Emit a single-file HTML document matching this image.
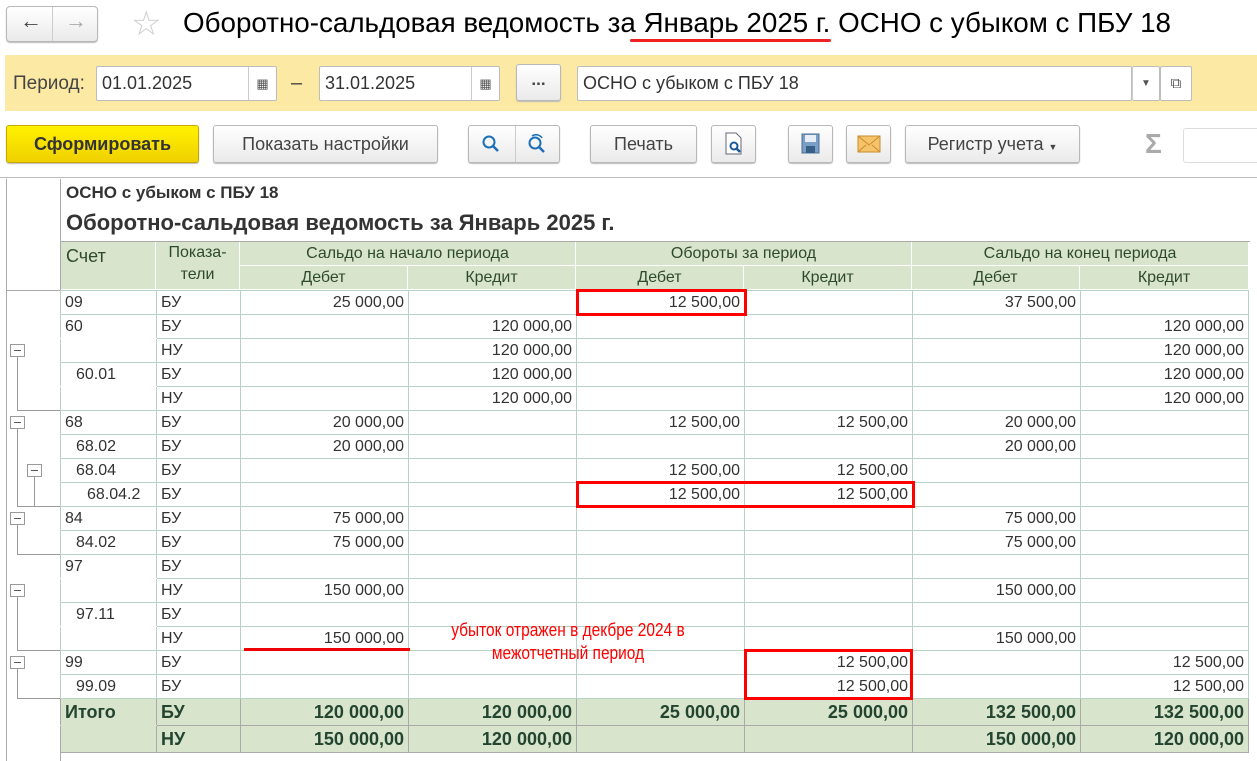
<!DOCTYPE html>
<html><head><meta charset="utf-8">
<style>
*{box-sizing:border-box;margin:0;padding:0}
body{width:1257px;height:761px;overflow:hidden;background:#fff;font-family:"Liberation Sans",Arial,sans-serif;color:#333;position:relative}
.abs{position:absolute}
.btn{position:absolute;border:1px solid #b8b8b8;border-radius:3px;background:linear-gradient(#fff,#eaeaea);box-shadow:0 1px 1px #bbb;font-size:17px;color:#444;text-align:center}
.inp{position:absolute;background:#fff;border:1px solid #bdbdbd;border-radius:2px;font-size:18px;color:#333;padding-left:5px;line-height:33px;height:35px}
table{position:absolute;left:60px;top:290px;border-collapse:collapse;table-layout:fixed;font-size:16px}
td{border:1px solid #b6d3c6;height:24px;padding:0 4px;color:#333;white-space:nowrap;overflow:hidden}
td.n{text-align:right}
tr.t td{background:#d8e4cc;border-color:#aaa;height:27px;font-weight:bold;font-size:18px;color:#234530}
.hd{position:absolute;background:#d8e4cc;color:#2e4a2e;font-size:16px;text-align:center;border-right:1px solid #fff;border-bottom:1px solid #fff}
.red{position:absolute;border:3px solid #f00}
.mb{position:absolute;width:15px;height:13px;border:1px solid #999;background:#fff;}
.mb:after{content:"";position:absolute;left:3px;right:3px;top:5px;height:1px;background:#555}
.vl{position:absolute;width:1px;background:#999}
.hl{position:absolute;height:1px;background:#999}
.cal{position:absolute;width:28px;height:33px;border-left:1px solid #ccc;font-size:13px;text-align:center;line-height:33px;color:#555}
</style></head><body>
<!-- nav -->
<div class="btn" style="left:6px;top:6px;width:92px;height:36px;border-radius:4px"></div>
<div class="abs" style="left:52px;top:7px;width:1px;height:34px;background:#ccc"></div>
<div class="abs" style="left:20px;top:8px;font-size:22px;color:#444;font-weight:bold">&#8592;</div>
<div class="abs" style="left:65px;top:8px;font-size:22px;color:#aaa;font-weight:bold">&#8594;</div>
<div class="abs" style="left:131px;top:4px;font-size:34px;color:#ccc">&#9734;</div>
<div class="abs" style="left:183px;top:7px;font-size:28px;color:#000;white-space:nowrap;transform:scaleX(0.992);transform-origin:left">Оборотно-сальдовая ведомость за Январь 2025 г. ОСНО с убыком с ПБУ 18</div>
<div class="abs" style="left:630px;top:39px;width:201px;height:3px;background:#e22;border-radius:2px"></div>
<!-- period bar -->
<div class="abs" style="left:5px;top:55px;width:1252px;height:56px;background:#fbe9a4"></div>
<div class="abs" style="left:13px;top:73px;font-size:19px;color:#444">Период:</div>
<div class="inp" style="left:96px;top:66px;width:181px">01.01.2025<div class="cal" style="left:151px;top:0">&#9638;</div></div>
<div class="abs" style="left:291px;top:72px;font-size:20px;color:#444">–</div>
<div class="inp" style="left:319px;top:66px;width:181px">31.01.2025<div class="cal" style="left:151px;top:0">&#9638;</div></div>
<div class="btn" style="left:516px;top:64px;width:45px;height:37px;line-height:30px;font-weight:bold">...</div>
<div class="inp" style="left:577px;top:66px;width:555px">ОСНО с убыком с ПБУ 18</div>
<div class="inp" style="left:1132px;top:66px;width:28px;border-left:1px solid #ccc;padding:0;font-size:10px;text-align:center;color:#555">&#9660;</div>
<div class="inp" style="left:1160px;top:66px;width:32px;padding:0;font-size:15px;text-align:center;color:#555">&#10697;</div>
<!-- toolbar -->
<div class="btn" style="left:6px;top:125px;width:193px;height:38px;line-height:36px;background:linear-gradient(#fff200,#f0d000);border-color:#c8a800;font-weight:bold;color:#333;font-size:18px">Сформировать</div>
<div class="btn" style="left:213px;top:125px;width:225px;height:38px;line-height:36px;font-size:18px">Показать настройки</div>
<div class="btn" style="left:468px;top:125px;width:92px;height:38px"></div>
<div class="abs" style="left:515px;top:126px;width:1px;height:36px;background:#ccc"></div>
<svg class="abs" style="left:480px;top:133px" width="22" height="22"><circle cx="9" cy="9" r="5.5" fill="none" stroke="#1c6fb8" stroke-width="2"/><line x1="13" y1="13" x2="18" y2="18" stroke="#1c6fb8" stroke-width="2.5"/></svg>
<svg class="abs" style="left:526px;top:133px" width="22" height="22"><circle cx="9" cy="10" r="5.5" fill="none" stroke="#1c6fb8" stroke-width="2"/><line x1="13" y1="14" x2="18" y2="19" stroke="#1c6fb8" stroke-width="2.5"/><path d="M6 3 A7 7 0 0 1 16 5" fill="none" stroke="#1c6fb8" stroke-width="1.5"/></svg>
<div class="btn" style="left:590px;top:125px;width:107px;height:38px;line-height:36px;font-size:18px">Печать</div>
<div class="btn" style="left:711px;top:125px;width:45px;height:38px"></div>
<svg class="abs" style="left:722px;top:131px" width="24" height="26"><path d="M4 2h10l5 5v16H4z" fill="#fff" stroke="#667"/><circle cx="12" cy="15" r="3.5" fill="none" stroke="#1a5a98" stroke-width="2"/><line x1="14.5" y1="17.5" x2="18" y2="21" stroke="#1a5a98" stroke-width="2.5"/></svg>
<div class="btn" style="left:788px;top:125px;width:45px;height:38px"></div>
<svg class="abs" style="left:800px;top:133px" width="22" height="22"><rect x="2" y="1" width="17" height="19" fill="#7a9fc7" stroke="#4a6f97"/><rect x="5" y="2" width="11" height="7" fill="#e8eef5"/><rect x="6" y="13" width="9" height="7" fill="#3a5f87"/></svg>
<div class="btn" style="left:846px;top:125px;width:45px;height:38px"></div>
<svg class="abs" style="left:857px;top:135px" width="24" height="18"><rect x="1" y="1" width="22" height="16" fill="#f5c36a" stroke="#c98d2c"/><path d="M1 1l11 9 11-9M1 17l8-7M23 17l-8-7" fill="none" stroke="#c98d2c"/></svg>
<div class="btn" style="left:905px;top:125px;width:175px;height:38px;line-height:36px;font-size:18px">Регистр учета <span style="font-size:9px">&#9660;</span></div>
<div class="abs" style="left:1145px;top:128px;font-size:28px;color:#aaa;font-weight:bold">&#931;</div>
<div class="abs" style="left:1183px;top:128px;width:80px;height:35px;border:1px solid #ddd;border-radius:3px"></div>
<!-- report frame -->
<div class="abs" style="left:0;top:177px;width:1257px;height:1px;background:#bbb"></div>
<div class="abs" style="left:6px;top:179px;width:1px;height:582px;background:#aaa"></div>
<div class="abs" style="left:60px;top:179px;width:1px;height:112px;background:#aaa"></div>
<div class="abs" style="left:60px;top:698px;width:1px;height:63px;background:#aaa"></div>
<div class="abs" style="left:66px;top:183px;font-size:17px;font-weight:bold;color:#333">ОСНО с убыком с ПБУ 18</div>
<div class="abs" style="left:66px;top:210px;font-size:22px;font-weight:bold;color:#333">Оборотно-сальдовая ведомость за Январь 2025 г.</div>
<div class="abs" style="left:60px;top:241px;width:1190px;height:1px;background:#aaa"></div>
<div class="abs" style="left:6px;top:290px;width:55px;height:1px;background:#aaa"></div>
<!-- header -->
<div class="hd" style="left:61px;top:242px;width:95px;height:48px;text-align:left;padding:4px 0 0 5px;font-size:18px">Счет</div>
<div class="hd" style="left:156px;top:242px;width:84px;height:48px;line-height:22px">Показа-<br>тели</div>
<div class="hd" style="left:240px;top:242px;width:336px;height:24px;line-height:24px">Сальдо на начало периода</div>
<div class="hd" style="left:576px;top:242px;width:336px;height:24px;line-height:24px">Обороты за период</div>
<div class="hd" style="left:912px;top:242px;width:337px;height:24px;line-height:24px">Сальдо на конец периода</div>
<div class="hd" style="left:240px;top:266px;width:168px;height:24px;line-height:24px">Дебет</div>
<div class="hd" style="left:408px;top:266px;width:168px;height:24px;line-height:24px">Кредит</div>
<div class="hd" style="left:576px;top:266px;width:168px;height:24px;line-height:24px">Дебет</div>
<div class="hd" style="left:744px;top:266px;width:168px;height:24px;line-height:24px">Кредит</div>
<div class="hd" style="left:912px;top:266px;width:168px;height:24px;line-height:24px">Дебет</div>
<div class="hd" style="left:1080px;top:266px;width:169px;height:24px;line-height:24px">Кредит</div>
<table>
<colgroup><col style="width:96px"><col style="width:84px"><col style="width:168px"><col style="width:168px"><col style="width:168px"><col style="width:168px"><col style="width:168px"><col style="width:168px"></colgroup>
<tr><td>09</td><td>БУ</td><td class="n">25 000,00</td><td></td><td class="n">12 500,00</td><td></td><td class="n">37 500,00</td><td></td></tr>
<tr><td style="border-bottom-color:#fff">60</td><td>БУ</td><td></td><td class="n">120 000,00</td><td></td><td></td><td></td><td class="n">120 000,00</td></tr>
<tr><td></td><td>НУ</td><td></td><td class="n">120 000,00</td><td></td><td></td><td></td><td class="n">120 000,00</td></tr>
<tr><td style="padding-left:15px;border-bottom-color:#fff">60.01</td><td>БУ</td><td></td><td class="n">120 000,00</td><td></td><td></td><td></td><td class="n">120 000,00</td></tr>
<tr><td></td><td>НУ</td><td></td><td class="n">120 000,00</td><td></td><td></td><td></td><td class="n">120 000,00</td></tr>
<tr><td>68</td><td>БУ</td><td class="n">20 000,00</td><td></td><td class="n">12 500,00</td><td class="n">12 500,00</td><td class="n">20 000,00</td><td></td></tr>
<tr><td style="padding-left:15px">68.02</td><td>БУ</td><td class="n">20 000,00</td><td></td><td></td><td></td><td class="n">20 000,00</td><td></td></tr>
<tr><td style="padding-left:15px">68.04</td><td>БУ</td><td></td><td></td><td class="n">12 500,00</td><td class="n">12 500,00</td><td></td><td></td></tr>
<tr><td style="padding-left:26px">68.04.2</td><td>БУ</td><td></td><td></td><td class="n">12 500,00</td><td class="n">12 500,00</td><td></td><td></td></tr>
<tr><td>84</td><td>БУ</td><td class="n">75 000,00</td><td></td><td></td><td></td><td class="n">75 000,00</td><td></td></tr>
<tr><td style="padding-left:15px">84.02</td><td>БУ</td><td class="n">75 000,00</td><td></td><td></td><td></td><td class="n">75 000,00</td><td></td></tr>
<tr><td style="border-bottom-color:#fff">97</td><td>БУ</td><td></td><td></td><td></td><td></td><td></td><td></td></tr>
<tr><td></td><td>НУ</td><td class="n">150 000,00</td><td></td><td></td><td></td><td class="n">150 000,00</td><td></td></tr>
<tr><td style="padding-left:15px;border-bottom-color:#fff">97.11</td><td>БУ</td><td></td><td></td><td></td><td></td><td></td><td></td></tr>
<tr><td></td><td>НУ</td><td class="n">150 000,00</td><td></td><td></td><td></td><td class="n">150 000,00</td><td></td></tr>
<tr><td>99</td><td>БУ</td><td></td><td></td><td></td><td class="n">12 500,00</td><td></td><td class="n">12 500,00</td></tr>
<tr><td style="padding-left:15px">99.09</td><td>БУ</td><td></td><td></td><td></td><td class="n">12 500,00</td><td></td><td class="n">12 500,00</td></tr>
<tr class="t"><td style="border-bottom-color:#d8e4cc">Итого</td><td>БУ</td><td class="n">120 000,00</td><td class="n">120 000,00</td><td class="n">25 000,00</td><td class="n">25 000,00</td><td class="n">132 500,00</td><td class="n">132 500,00</td></tr>
<tr class="t"><td></td><td>НУ</td><td class="n">150 000,00</td><td class="n">120 000,00</td><td></td><td></td><td class="n">150 000,00</td><td class="n">120 000,00</td></tr>
</table>
<!-- tree -->
<div class="mb" style="left:10px;top:344px"></div><div class="vl" style="left:17px;top:357px;height:53px"></div><div class="hl" style="left:17px;top:410px;width:43px"></div>
<div class="mb" style="left:10px;top:416px"></div><div class="vl" style="left:17px;top:429px;height:77px"></div><div class="hl" style="left:17px;top:506px;width:43px"></div>
<div class="mb" style="left:27px;top:464px"></div><div class="vl" style="left:34px;top:477px;height:29px"></div>
<div class="mb" style="left:10px;top:512px"></div><div class="vl" style="left:17px;top:525px;height:29px"></div><div class="hl" style="left:17px;top:554px;width:43px"></div>
<div class="mb" style="left:10px;top:584px"></div><div class="vl" style="left:17px;top:597px;height:53px"></div><div class="hl" style="left:17px;top:650px;width:43px"></div>
<div class="mb" style="left:10px;top:656px"></div><div class="vl" style="left:17px;top:669px;height:29px"></div><div class="hl" style="left:17px;top:698px;width:43px"></div>
<!-- annotations -->
<div class="red" style="left:576px;top:289px;width:171px;height:27px"></div>
<div class="red" style="left:576px;top:481px;width:339px;height:27px"></div>
<div class="red" style="left:744px;top:649px;width:169px;height:51px"></div>
<div class="abs" style="left:244px;top:648px;width:166px;height:3px;background:#e00"></div>
<div class="abs" style="left:400px;top:619px;width:336px;text-align:center;color:#f00;font-size:18px;line-height:23px;transform:scaleX(0.86)">убыток отражен в декбре 2024 в<br>межотчетный период</div>
</body></html>
